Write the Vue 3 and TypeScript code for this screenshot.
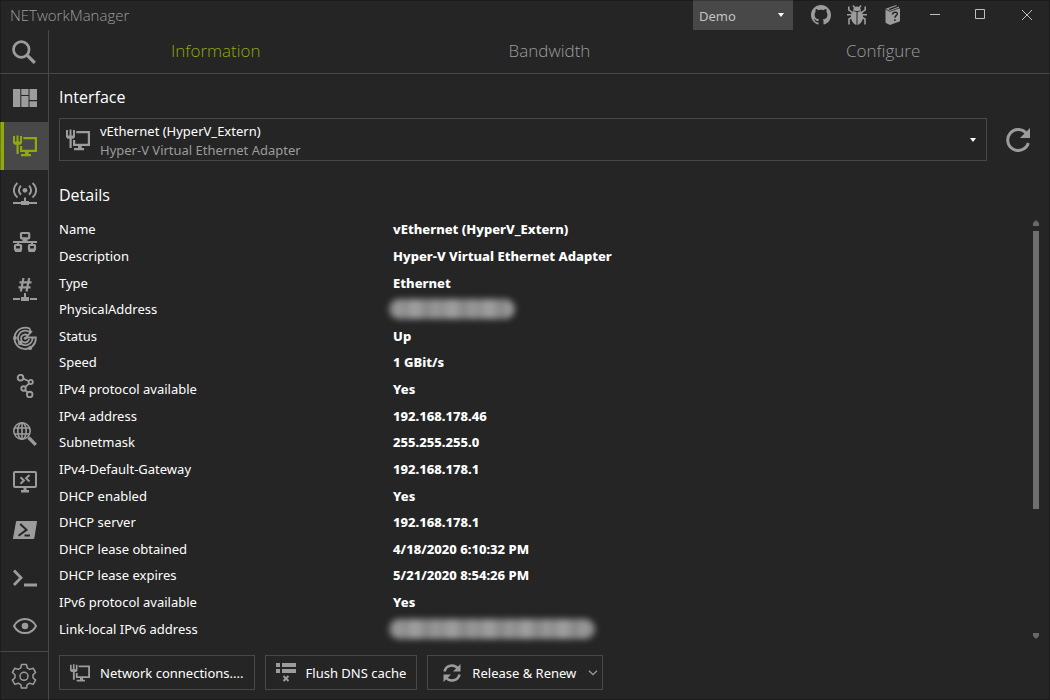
<script setup lang="ts">
import { ref } from 'vue'

interface Detail {
  label: string
  value: string
  hidden?: 'short' | 'long'
}

const tabs = ['Information', 'Bandwidth', 'Configure']
const activeTab = ref('Information')
const profile = ref('Demo')
const adapter = ref('vEthernet (HyperV_Extern)')

const tools = [
  { id: 'dashboard', name: 'Dashboard' },
  { id: 'interface', name: 'Network Interface' },
  { id: 'wifi', name: 'WiFi' },
  { id: 'ipscan', name: 'IP Scanner' },
  { id: 'portscan', name: 'Port Scanner' },
  { id: 'ping', name: 'Ping Monitor' },
  { id: 'trace', name: 'Traceroute' },
  { id: 'dns', name: 'DNS Lookup' },
  { id: 'rdp', name: 'Remote Desktop' },
  { id: 'powershell', name: 'PowerShell' },
  { id: 'putty', name: 'PuTTY' },
  { id: 'vnc', name: 'TightVNC' },
]
const activeTool = ref('interface')

const details: Detail[] = [
  { label: 'Name', value: 'vEthernet (HyperV_Extern)' },
  { label: 'Description', value: 'Hyper-V Virtual Ethernet Adapter' },
  { label: 'Type', value: 'Ethernet' },
  { label: 'PhysicalAddress', value: '', hidden: 'short' },
  { label: 'Status', value: 'Up' },
  { label: 'Speed', value: '1 GBit/s' },
  { label: 'IPv4 protocol available', value: 'Yes' },
  { label: 'IPv4 address', value: '192.168.178.46' },
  { label: 'Subnetmask', value: '255.255.255.0' },
  { label: 'IPv4-Default-Gateway', value: '192.168.178.1' },
  { label: 'DHCP enabled', value: 'Yes' },
  { label: 'DHCP server', value: '192.168.178.1' },
  { label: 'DHCP lease obtained', value: '4/18/2020 6:10:32 PM' },
  { label: 'DHCP lease expires', value: '5/21/2020 8:54:26 PM' },
  { label: 'IPv6 protocol available', value: 'Yes' },
  { label: 'Link-local IPv6 address', value: '', hidden: 'long' },
]
</script>

<template>
  <div class="window">
    <svg class="defs" aria-hidden="true">
      <symbol id="i-ethernet" viewBox="0 0 24 24">
        <path fill="currentColor" d="M0 2h2v5.500h1.500V1.500h2v6H7V2h2v7l-1.500 1.700H5.700V20h-2.200v-9.300H1.500L0 9z" />
        <path fill="currentColor" d="M10.300 3H24v15h-8.300v2h2.300v2.300H8V20h4v-2H7v-6h2.200v3.800h12.600V5.200H10.300z" />
      </symbol>
    </svg>

    <header class="titlebar">
      <h1>NETworkManager</h1>
      <div class="profile">
        <select v-model="profile" aria-label="Profile"><option>Demo</option></select>
        <span class="caret"></span>
      </div>
      <div class="links">
        <button aria-label="GitHub">
          <svg width="20" height="20" viewBox="0 0 16 16"><path fill="currentColor" d="M8 0C3.580 0 0 3.580 0 8c0 3.540 2.290 6.530 5.470 7.590.4.07.55-.17.55-.38 0-.19-.01-.82-.01-1.490-2.010.37-2.530-.49-2.690-.94-.09-.23-.48-.94-.82-1.130-.28-.15-.68-.52-.01-.53.63-.01 1.080.58 1.230.82.72 1.210 1.870.87 2.330.66.07-.52.28-.87.51-1.070-1.780-.2-3.640-.89-3.640-3.950 0-.87.31-1.590.82-2.150-.08-.2-.36-1.020.08-2.120 0 0 .67-.21 2.200.82.64-.18 1.320-.27 2-.27.68 0 1.360.09 2 .27 1.530-1.040 2.200-.82 2.200-.82.44 1.100.16 1.920.08 2.120.51.56.82 1.270.82 2.150 0 3.070-1.870 3.750-3.650 3.950.29.25.54.73.54 1.480 0 1.070-.01 1.930-.01 2.200 0 .21.15.46.55.38A8.013 8.013 0 0016 8c0-4.420-3.580-8-8-8z" /></svg>
        </button>
        <button aria-label="Report an issue">
          <svg width="20" height="20" viewBox="0 0 20 20" fill="none" stroke="currentColor" stroke-width="1.600">
            <path d="M6 0.500l2 2.500M14 0.500L12 3M1.800 1.500v3.300l4 3M18.200 1.500v3.300l-4 3M0 9.800h5M20 9.800h-5M5.500 12L2 14v5.500M14.500 12l3.500 2v5.500" />
            <path fill="currentColor" stroke="none" d="M6 5.500C6.300 3 8 1.500 10 1.500s3.700 1.500 4 4L10.500 6h-1zM9.500 7v13C5.800 19 4 15.300 4 11.800c0-2.300.8-4.300 2-5.800zM10.500 7v13c3.700-1 5.500-4.700 5.500-8.200 0-2.300-.8-4.300-2-5.800z" />
          </svg>
        </button>
        <button aria-label="Documentation">
          <svg width="20" height="20" viewBox="0 0 20 20">
            <path fill="currentColor" d="M2.500 3.800L13.500 0v1L5.500 4 7 5l9-3.500V3l1 .5v12.700L7 20l-4.500-2.200z" />
            <path fill="none" stroke="#252525" stroke-width=".8" d="M2.500 4.200L7 6.300l10-3.500" />
            <path fill="none" stroke="#252525" stroke-width="1.500" d="M9.500 9.500c0-2.300 4.800-3.400 4.800-.8 0 2-2.400 2-2.400 4M11.900 14.200v1.700" />
          </svg>
        </button>
      </div>
      <div class="caption">
        <button aria-label="Minimize"><svg width="12" height="12" viewBox="0 0 12 12"><path d="M1 5.500h10" /></svg></button>
        <button aria-label="Maximize"><svg width="12" height="12" viewBox="0 0 12 12"><path d="M.5.5h9v9h-9z" /></svg></button>
        <button aria-label="Close"><svg width="12" height="12" viewBox="0 0 12 12"><path d="M1 1l10 10M11 1L1 11" /></svg></button>
      </div>
    </header>

    <div class="body">
      <nav class="sidebar" aria-label="Applications">
        <button class="search" aria-label="Search">
          <svg width="24" height="24" viewBox="0 0 24 24" fill="none" stroke="currentColor"><circle cx="9.300" cy="9.500" r="7.800" stroke-width="2.700" /><path stroke-width="3.300" d="M15 15.200l7.800 7.700" /></svg>
        </button>
        <ul>
          <li v-for="tool in tools" :key="tool.id">
            <button :class="['tool', { active: activeTool === tool.id }]" :aria-label="tool.name" @click="activeTool = tool.id">
              <svg width="24" height="24" viewBox="0 0 24 24" fill="none" stroke="currentColor" stroke-width="2">
                <path v-if="tool.id === 'dashboard'" fill="currentColor" stroke="none" d="M0 3h7.300v18H0zM8.300 3h7.200v6H8.300zM8.300 10h7.200v11H8.300zM16.500 3H24v11h-7.500zM16.500 15.300H24V21h-7.500z" />
                <use v-else-if="tool.id === 'interface'" href="#i-ethernet" stroke="none" />
                <g v-else-if="tool.id === 'wifi'">
                  <path d="M4.500 1C-.3 5 -.3 11.500 4.500 15.500M19.500 1c4.800 4 4.800 10.500 0 14.500M8 3.800c-2.800 2.500-2.800 6.500 0 9M16 3.800c2.800 2.500 2.800 6.500 0 9M0 21h24M12 15.500V19" />
                  <circle cx="12" cy="8.300" r="2.400" fill="currentColor" stroke="none" />
                  <path fill="currentColor" stroke="none" d="M8 19h8v4H8z" />
                </g>
                <g v-else-if="tool.id === 'ipscan'" stroke-width="2.200">
                  <rect x="8" y="3" width="8.200" height="5.400" rx=".7" />
                  <path stroke-width="2" d="M12 8v4M0 12h24M5 12v3M19 12v3M9.500 10h5M2 21h6.500M15.500 21H22" />
                  <rect x="2" y="15" width="6" height="4.700" rx=".5" /><rect x="16" y="15" width="6" height="4.700" rx=".5" />
                </g>
                <g v-else-if="tool.id === 'portscan'">
                  <path stroke-width="2.200" d="M10.500 0L7.800 13.500M16.200 0l-2.700 13.500M6.500 4.300h12M5.500 9.300h12" />
                  <path d="M0 21h7M17 21h7M12 15v4" />
                  <path fill="currentColor" stroke="none" d="M8 19h8v4H8z" />
                </g>
                <g v-else-if="tool.id === 'ping'" stroke-width="1.800">
                  <path d="M17 2.800A10.700 10.700 0 1 0 22.800 11.500H13M17 2.800v5.200M16.500 6A7.300 7.300 0 1 0 19.600 11.500M14.700 9.500A4 4 0 1 0 16 13M13 11.500L19 5" />
                  <g fill="currentColor" stroke="none"><circle cx="2" cy="12" r="1.900" /><circle cx="7.200" cy="17" r="2.200" /><circle cx="17.200" cy="22" r="2" /><circle cx="12.300" cy="12.200" r="1.500" /></g>
                </g>
                <g v-else-if="tool.id === 'trace'" stroke-width="1.900">
                  <circle cx="7.500" cy="3.700" r="2.800" /><circle cx="17.700" cy="8" r="2.100" /><circle cx="10.500" cy="14.500" r="2.200" /><circle cx="16.700" cy="20.500" r="2.800" />
                  <path d="M10.200 4.700l5.300 2.300M16 9.600l-3.700 3.300M12 16l2.400 2.400" />
                </g>
                <g v-else-if="tool.id === 'dns'" stroke-width="1.600">
                  <circle cx="9" cy="9" r="8.200" /><ellipse cx="9" cy="9" rx="4.200" ry="8.200" /><path d="M9 1v16M1.500 6h15M1.500 12h15" />
                  <path stroke-width="3.300" d="M15.500 15.500l7.300 7.300" />
                </g>
                <g v-else-if="tool.id === 'rdp'">
                  <rect x="1" y="2" width="22" height="15" rx="1" />
                  <path fill="currentColor" stroke="none" d="M10.500 17h3v3h2.500v2.500H8V20h2.500z" />
                  <path d="M7.500 7.300l3.400 3.200-3.400 3.200M16.500 5l-3.400 3.200 3.400 3.200" />
                </g>
                <g v-else-if="tool.id === 'powershell'">
                  <path fill="currentColor" stroke="none" d="M4 3h19.500q.7 0 .5.700L21.300 20.300q-.2.700-1 .7H.5q-.6 0-.5-.7L3 3.700Q3.200 3 4 3z" />
                  <path class="cut" d="M7.200 6l6.300 5.800-8 6M11.500 17.500h5.500" />
                </g>
                <path v-else-if="tool.id === 'putty'" stroke-width="2.800" d="M1 4.500l7 7.300-7 7.200M11 19h13" />
                <g v-else>
                  <path d="M1 12C3.500 7 7.300 4.900 12 4.900S20.500 7 23 12c-2.500 5-6.300 7.100-11 7.100S3.500 17 1 12z" />
                  <circle cx="12" cy="12" r="3.300" fill="currentColor" stroke="none" />
                </g>
              </svg>
            </button>
          </li>
        </ul>
        <button class="settings" aria-label="Settings">
          <svg width="26" height="26" viewBox="0 0 26 26" fill="none" stroke="currentColor" stroke-width="1.500">
            <path stroke-linejoin="round" d="M10.500 1.500h5l.7 3.400 2.600 1.500 3.300-1.200 2.500 4.300-2.600 2.300v3l2.600 2.300-2.500 4.300-3.300-1.200-2.600 1.500-.7 3.300h-5l-.7-3.300-2.600-1.500-3.300 1.200-2.500-4.300L4 14.800v-3L1.400 9.500l2.500-4.300 3.300 1.200 2.600-1.500z" />
            <circle cx="13" cy="13.300" r="4" />
          </svg>
        </button>
      </nav>

      <main>
        <div class="tabs" role="tablist">
          <button v-for="tab in tabs" :key="tab" role="tab" :aria-selected="activeTab === tab" :class="{ active: activeTab === tab }" @click="activeTab = tab">{{ tab }}</button>
        </div>

        <section class="content">
          <h2>Interface</h2>
          <div class="picker">
            <div class="combo">
              <svg width="24" height="24"><use href="#i-ethernet" /></svg>
              <label for="adapter">
                <span class="adapter-name">{{ adapter }}</span>
                <span class="adapter-kind">Hyper-V Virtual Ethernet Adapter</span>
              </label>
              <span class="caret"></span>
              <select id="adapter" v-model="adapter"><option value="vEthernet (HyperV_Extern)"></option></select>
            </div>
            <button class="reload" aria-label="Reload">
              <svg width="24" height="24" viewBox="0 0 24 24"><path fill="none" stroke="currentColor" stroke-width="3" d="M20.500 5.500A10.500 10.500 0 1 0 22.300 15" /><path fill="currentColor" d="M24 0v10H14z" /></svg>
            </button>
          </div>

          <h2>Details</h2>
          <div class="details">
            <table>
              <tbody>
                <tr v-for="row in details" :key="row.label">
                  <th scope="row">{{ row.label }}</th>
                  <td><span v-if="row.hidden" :class="['redacted', row.hidden]"></span><template v-else>{{ row.value }}</template></td>
                </tr>
              </tbody>
            </table>
            <div class="scrollbar" aria-hidden="true">
              <svg width="6" height="6" viewBox="0 0 6 6"><path d="M0 6V3l3-3 3 3v3z" /></svg>
              <div class="track"><div class="thumb"></div></div>
              <svg width="6" height="6" viewBox="0 0 6 6"><path d="M0 0v3l3 3 3-3V0z" /></svg>
            </div>
          </div>

          <footer>
            <button class="action">
              <svg width="20" height="20"><use href="#i-ethernet" /></svg>Network connections....
            </button>
            <button class="action">
              <svg width="20" height="20" viewBox="0 0 20 20"><path fill="currentColor" d="M0 0h4v4H0zM6 0h14v4H6zM0 6h4v4H0zM6 6h14v4H6z" /><path fill="none" stroke="currentColor" stroke-width="2" d="M7.500 13l5 5M12.500 13l-5 5" /></svg>Flush DNS cache
            </button>
            <button class="action release">
              <svg width="20" height="20" viewBox="0 0 20 20"><path fill="none" stroke="currentColor" stroke-width="2.600" d="M2.500 8.500C4 2 12 .5 16 5.500M17.500 11.500C16 18 8 19.500 4 14.500" /><path fill="currentColor" d="M18.500 1v7.500H11zM1.500 19v-7.500H9z" /></svg>Release &amp; Renew
              <svg class="chevron" width="10" height="6" viewBox="0 0 10 6"><path fill="none" stroke="currentColor" stroke-width="1.300" d="M1 .7l4 4 4-4" /></svg>
            </button>
          </footer>
        </section>
      </main>
    </div>
  </div>
</template>

<style>
body { margin: 0; background: #252525; }
</style>

<style scoped>
* { box-sizing: border-box; }
.window { position: relative; display: flex; flex-direction: column; min-height: 100vh; background: #252525; color: #fff; font: 13px/20px "Noto Sans", "Open Sans", sans-serif; }
.window::after { content: ""; position: absolute; inset: 0; border: 1px solid rgba(0, 0, 0, .25); pointer-events: none; }
.defs { position: absolute; width: 0; height: 0; }
button, select { font: inherit; color: inherit; background: none; border: 0; padding: 0; margin: 0; }
svg { display: block; flex: none; }
h1, h2 { margin: 0; font-family: "Open Sans", "Noto Sans", sans-serif; }

.titlebar { display: flex; height: 30px; color: #9c9c9c; }
.titlebar h1 { flex: 1; padding-left: 10px; font-size: 15px; font-weight: 300; line-height: 30px; }
.profile { position: relative; width: 100px; }
.profile select { width: 100%; height: 30px; padding: 2px 6px 0; appearance: none; background: #484848; color: #c4c4c4; }
.caret { width: 0; height: 0; border: 3px solid transparent; border-top: 4px solid #fff; border-bottom: 0; }
.profile .caret { position: absolute; right: 9px; top: 13px; pointer-events: none; }
.links { display: flex; gap: 16px; padding: 0 9px 0 18px; }
.caption { display: flex; }
.caption button { display: grid; place-items: center; width: 46px; }
.caption svg { fill: none; stroke: #c0c0c0; stroke-width: 1; }

.body { flex: 1; display: flex; }
.sidebar { display: flex; flex-direction: column; width: 49px; border-right: 1px solid #484848; color: #9c9c9c; }
.sidebar ul { flex: 1; margin: 0; padding: 0; list-style: none; }
.sidebar button { display: grid; place-items: center; width: 100%; height: 48px; }
.sidebar .search { height: 44px; border-bottom: 1px solid #484848; }
.sidebar .tool { border-left: 4px solid transparent; padding-right: 2px; }
.sidebar .tool.active { background: #484848; border-left-color: #90a911; color: #90a911; }
.sidebar .settings { border-top: 1px solid #484848; height: 49px; }
.cut { stroke: #252525; }

main { flex: 1; min-width: 0; display: flex; flex-direction: column; }
.tabs { display: grid; grid-template-columns: repeat(3, 1fr); height: 44px; border-bottom: 1px solid #484848; }
.tabs button { padding-bottom: 2px; color: #9c9c9c; font-family: "Open Sans", "Noto Sans", sans-serif; font-size: 17px; font-weight: 300; }
.tabs .active { color: #90a911; }

.content { flex: 1; display: flex; flex-direction: column; padding: 11px 10px 10px; }
h2 { font-size: 16px; font-weight: 400; line-height: 24px; }
.picker { display: flex; align-items: center; margin: 9px 0 22px; }
.combo { position: relative; flex: 1; display: flex; align-items: center; gap: 10px; height: 43px; padding: 0 10px 0 6px; border: 1px solid #484848; }
.combo svg { color: #9c9c9c; }
.combo label { flex: 1; padding-top: 2px; line-height: 19px; }
.combo label span { display: block; }
.adapter-kind { color: #9c9c9c; }
.combo select { position: absolute; inset: 0; width: 100%; opacity: 0; }
.reload { margin: 0 10px 0 19px; color: #9c9c9c; }

.details { flex: 1; display: flex; margin: 9px 0 13px; }
table { flex: 1; border-collapse: collapse; table-layout: fixed; }
th, td { padding: 0; text-align: left; vertical-align: middle; }
th { width: 34.3%; font-weight: 400; }
td { font-weight: 800; }
.redacted { display: block; height: 20px; margin-left: -4px; border-radius: 10px; filter: blur(3px); background: repeating-linear-gradient(90deg, #868686 0 2px, #999 8px 11px, #8a8a8a 16px, #a0a0a0 24px 28px, #868686 37px); }
.short { width: 126px; }
.long { width: 206px; }

.scrollbar { display: flex; flex-direction: column; width: 6px; margin-right: 1px; padding: 4px 0 3px; }
.scrollbar svg { fill: #686868; }
.track { flex: 1; margin: 5px 0; }
.thumb { width: 6px; height: 70%; background: #6f6f6f; }

footer { display: flex; gap: 10px; }
.action { display: flex; align-items: center; gap: 10px; height: 35px; padding: 0 10px; border: 1px solid #484848; white-space: nowrap; }
.action svg { color: #9c9c9c; }
.action.release { padding: 0 4px 0 14px; }
.chevron { margin-left: 2px; }
</style>
